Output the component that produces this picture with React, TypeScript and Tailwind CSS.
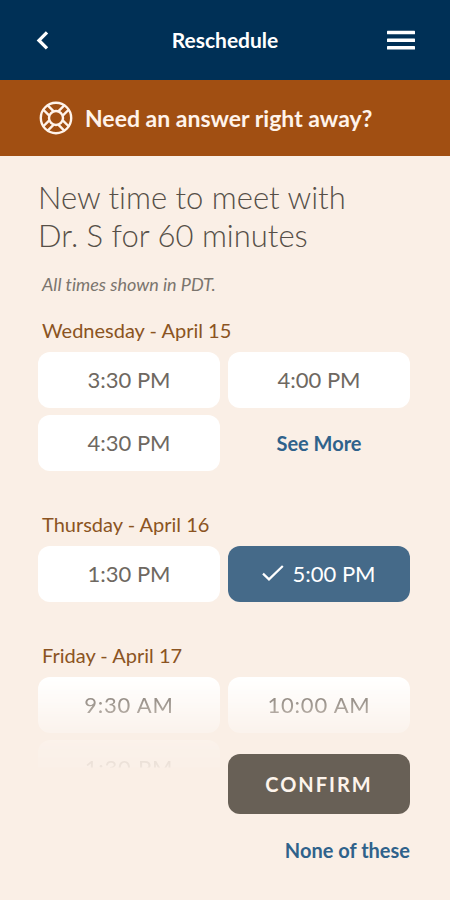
import { useState } from 'react';

const days = [
  {
    "label": "Wednesday - April 15",
    "times": ["3:30 PM", "4:00 PM", "4:30 PM"],
    "more": true
  },
  {
    "label": "Thursday - April 16",
    "times": ["1:30 PM", "5:00 PM"],
    "more": false
  }
];

const lastDay = {
  "label": "Friday - April 17",
  "times": ["9:30 AM", "10:00 AM", "1:30 PM"]
};

const LifeRing = () => (
  <svg className="size-[34px]" viewBox="0 0 34 34" fill="none" stroke="currentColor" strokeWidth="2.4" aria-hidden="true">
    <circle cx="17" cy="17" r="15.2" />
    <circle cx="17" cy="17" r="7" />
    <path d="M14.7 10.3L8.5 4.1M10.3 14.7L4.1 8.5M19.3 10.3l6.2-6.2M23.7 14.7l6.2-6.2M14.7 23.7l-6.2 6.2M10.3 19.3l-6.2 6.2M19.3 23.7l6.2 6.2M23.7 19.3l6.2 6.2" />
  </svg>
);

const Check = () => (
  <svg className="w-[22px] h-[16px]" viewBox="0 0 22 16" fill="none" stroke="currentColor" strokeWidth="2.2" aria-hidden="true">
    <path d="M1 8.6l6 5.8L20.8 1" />
  </svg>
);

type SlotProps = {
  time: string;
  selected: boolean;
  onSelect: () => void;
};

const Slot = ({ time, selected, onSelect }: SlotProps) => (
  <button
    type="button"
    aria-pressed={selected}
    onClick={onSelect}
    className={
      selected
        ? 'h-14 pb-0.5 rounded-xl flex items-center justify-center gap-2 text-[22px] bg-[#456a89] text-white cursor-pointer'
        : 'h-14 pb-0.5 rounded-xl flex items-center justify-center gap-2 text-[22px] bg-white text-[#6e6861] cursor-pointer'
    }
  >
    {selected && <Check />}
    {time}
  </button>
);

const App = () => {
  const [picked, setPicked] = useState('Thursday - April 16 5:00 PM');

  return (
    <div className="min-h-screen bg-[#faefe6] font-['Lato',sans-serif] [font-variant-ligatures:none] text-[#68625b]">
      <header className="h-20 bg-[#003056] text-white flex items-center justify-between px-[35px]">
        <button type="button" aria-label="Back" className="w-7 cursor-pointer">
          <svg className="w-[14px] h-[20px]" viewBox="0 0 14 20" fill="none" stroke="currentColor" strokeWidth="3.3" aria-hidden="true">
            <path d="M12 2.4L4 10.4l8 8" />
          </svg>
        </button>
        <h1 className="text-[21px] font-bold">Reschedule</h1>
        <button type="button" aria-label="Menu" className="cursor-pointer">
          <svg className="w-7 h-5" viewBox="0 0 28 20" fill="currentColor" aria-hidden="true">
            <rect y="0.7" width="28" height="3.6" rx="0.6" />
            <rect y="8.4" width="28" height="3.6" rx="0.6" />
            <rect y="16" width="28" height="3.6" rx="0.6" />
          </svg>
        </button>
      </header>

      <a href="#help" className="h-[76px] bg-[#a14f12] text-[#fff3ea] flex items-center gap-3 px-[39px] text-[23px] font-bold">
        <LifeRing />
        Need an answer right away?
      </a>

      <main className="pl-[38px] pr-10 pt-[22px] pb-8">
        <h2 className="text-[31px] leading-[38px] font-light text-[#564f48]">
          New time to meet with<br />
          Dr. S for 60 minutes
        </h2>
        <p className="mt-[18px] pl-1 text-lg leading-6 italic text-[#7b756e]">All times shown in PDT.</p>

        <div className="mt-[22px] flex flex-col gap-[41px]">
          {days.map((day) => (
            <section key={day.label}>
              <h3 className="mb-2.5 pl-1 text-xl leading-6 text-[#8b5422]">{day.label}</h3>
              <div className="grid grid-cols-2 gap-x-2 gap-y-[7px]">
                {day.times.map((time) => (
                  <Slot
                    key={time}
                    time={time}
                    selected={picked === `${day.label} ${time}`}
                    onSelect={() => setPicked(`${day.label} ${time}`)}
                  />
                ))}
                {day.more && (
                  <button type="button" className="text-xl font-bold text-[#2f628b] cursor-pointer">See More</button>
                )}
              </div>
            </section>
          ))}

          <section>
            <h3 className="mb-2.5 pl-1 text-xl leading-6 text-[#8b5422]">{lastDay.label}</h3>
            {/* the rest of the list fades out behind the confirm button */}
            <div className="grid grid-cols-2 gap-x-2 gap-y-[7px] tracking-wider [mask-image:linear-gradient(to_bottom,black,rgba(0,0,0,0.3)_52px,rgba(0,0,0,0.18)_66px,rgba(0,0,0,0.08)_90px,transparent_91px)]">
              {lastDay.times.map((time) => (
                <Slot
                  key={time}
                  time={time}
                  selected={picked === `${lastDay.label} ${time}`}
                  onSelect={() => setPicked(`${lastDay.label} ${time}`)}
                />
              ))}
            </div>
          </section>
        </div>

        <div className="relative -mt-[42px] grid grid-cols-2 gap-x-2 gap-y-[22px]">
          <button type="button" className="col-start-2 h-[60px] rounded-xl bg-[#686056] text-[#fdf4ec] text-xl font-bold tracking-widest cursor-pointer">
            CONFIRM
          </button>
          <button type="button" className="col-start-2 justify-self-end text-xl font-bold text-[#2f628b] cursor-pointer">
            None of these
          </button>
        </div>
      </main>
    </div>
  );
};

export default App;
